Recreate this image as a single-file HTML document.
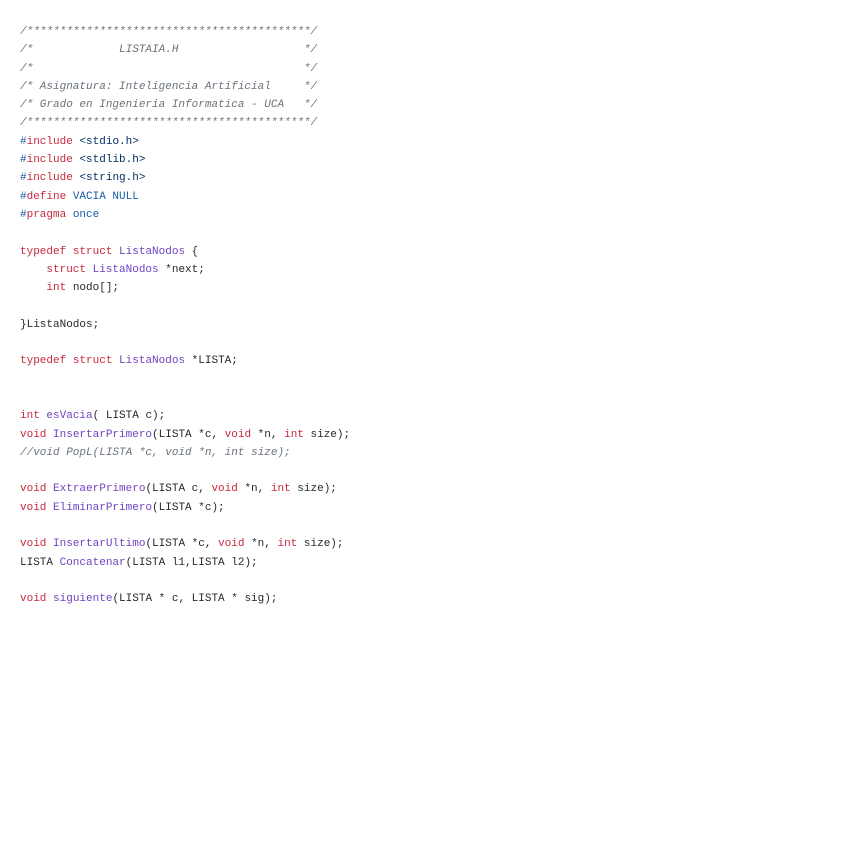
<!DOCTYPE html>
<html><head><meta charset="utf-8"><style>
html,body{margin:0;background:#fff;width:848px;height:848px;overflow:hidden}
pre{margin:0;position:absolute;left:20px;top:23px;font-family:"Liberation Mono",monospace;font-size:11px;line-height:18.29px;color:#24292e}
.c{color:#6a737d;font-style:italic}.k{color:#c8283f}.f{color:#6f42c1}.s{color:#032f62}.n{color:#1a5aa8}
</style></head><body><pre><span class="c">/*******************************************/
/*             LISTAIA.H                   */
/*                                         */
/* Asignatura: Inteligencia Artificial     */
/* Grado en Ingenieria Informatica - UCA   */
/*******************************************/</span>
<span class="n">#</span><span class="k">include</span> <span class="s">&lt;stdio.h&gt;</span>
<span class="n">#</span><span class="k">include</span> <span class="s">&lt;stdlib.h&gt;</span>
<span class="n">#</span><span class="k">include</span> <span class="s">&lt;string.h&gt;</span>
<span class="n">#</span><span class="k">define</span> <span class="n">VACIA NULL</span>
<span class="n">#</span><span class="k">pragma</span> <span class="n">once</span>

<span class="k">typedef</span> <span class="k">struct</span> <span class="f">ListaNodos</span> {
    <span class="k">struct</span> <span class="f">ListaNodos</span> *next;
    <span class="k">int</span> nodo[];

}ListaNodos;

<span class="k">typedef</span> <span class="k">struct</span> <span class="f">ListaNodos</span> *LISTA;


<span class="k">int</span> <span class="f">esVacia</span>( LISTA c);
<span class="k">void</span> <span class="f">InsertarPrimero</span>(LISTA *c, <span class="k">void</span> *n, <span class="k">int</span> size);
<span class="c">//void PopL(LISTA *c, void *n, int size);</span>

<span class="k">void</span> <span class="f">ExtraerPrimero</span>(LISTA c, <span class="k">void</span> *n, <span class="k">int</span> size);
<span class="k">void</span> <span class="f">EliminarPrimero</span>(LISTA *c);

<span class="k">void</span> <span class="f">InsertarUltimo</span>(LISTA *c, <span class="k">void</span> *n, <span class="k">int</span> size);
LISTA <span class="f">Concatenar</span>(LISTA l1,LISTA l2);

<span class="k">void</span> <span class="f">siguiente</span>(LISTA * c, LISTA * sig);</pre></body></html>
